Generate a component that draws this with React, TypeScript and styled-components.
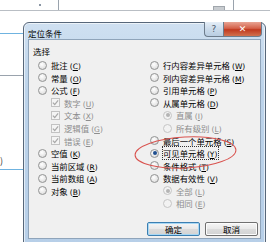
import React from "react";
import styled, { createGlobalStyle, css } from "styled-components";

const Global = createGlobalStyle`
  html, body { margin: 0; padding: 0; }
  body { width: 270px; height: 242px; overflow: hidden; background: #f6f7f8;
    font-family: "Noto Sans CJK SC", "Noto Sans", sans-serif; }
`;

const Screen = styled.div`
  position: relative;
  width: 270px;
  height: 242px;
  overflow: hidden;
  background: #f8f8f8;
  display: flex;
  flex-direction: column;
`;

const FormulaStrip = styled.div`
  height: 10px;
  display: flex;
  background: #ffffff;
  border-bottom: 1px solid #b9bec4;
`;

const NameBox = styled.div`
  width: 58px;
  position: relative;
  &::after { content: ""; position: absolute; left: 39px; top: 4px; width: 2px; height: 2px; background: #8a96a4; }
`;

const FormulaBox = styled.div`
  width: 166px;
  border-left: 1px solid #9aa3ad;
  border-right: 1px solid #9aa3ad;
  display: flex;
  justify-content: flex-end;
  align-items: flex-end;
  padding-right: 8px;
`;

const Thumb = styled.div`
  width: 10px;
  height: 3px;
  background: #c8ccd0;
  border: 1px solid #a0a6ac;
  border-bottom: none;
`;

const Sheet = styled.div`
  flex: 1;
  display: flex;
  flex-direction: column;
  background: #ffffff;
`;

const SheetLine = styled.div<{ $top: number; $color: string }>`
  margin-top: ${(p) => p.$top}px;
  width: 24px;
  height: 1px;
  background: ${(p) => p.$color};
`;

const SheetText = styled.div`
  margin-top: 80px;
  font-size: 9px;
  line-height: 10px;
  color: #333;
`;

const Dialog = styled.div`
  position: absolute;
  left: 23px;
  top: 22px;
  width: 243px;
  height: 224px;
  box-sizing: border-box;
  border: 1px solid #57677a;
  border-radius: 6px 6px 0 0;
  background: linear-gradient(180deg, #cfe0f1 0%, #bcd3ea 30%, #b7cfe8 100%);
  box-shadow: 0 0 0 1px rgba(255,255,255,0.6) inset;
  display: flex;
  flex-direction: column;
`;

const TitleBar = styled.div`
  height: 16px;
  display: flex;
  align-items: center;
  padding-left: 4px;
  font-size: 8.5px;
  color: #000;
  position: relative;
`;

const Title = styled.span`
  flex: 1;
  line-height: 10px;
  margin-top: 4px;
`;

const CaptionButtons = styled.div`
  position: absolute;
  right: 3px;
  top: -1px;
  display: flex;
`;

const CapBtn = styled.div<{ $close?: boolean }>`
  height: 14px;
  display: flex;
  align-items: center;
  justify-content: center;
  font-family: "DejaVu Sans", sans-serif;
  font-weight: bold;
  border: 1px solid #6d7c8c;
  border-top: none;
  ${(p) =>
    p.$close
      ? css`
          width: 37px;
          border-radius: 0 0 4px 0;
          background: linear-gradient(180deg, #e8a493 0%, #d4614a 45%, #c0391f 55%, #d0714f 100%);
          color: #fff;
          font-size: 9px;
        `
      : css`
          width: 18px;
          border-right: none;
          border-radius: 0 0 0 4px;
          background: linear-gradient(180deg, #e5eef7 0%, #cbdbeb 50%, #b9cde2 100%);
          color: #4a5a6c;
          font-size: 9px;
          font-weight: normal;
        `}
`;

const Client = styled.div`
  margin: 0 4px 6px 4px;
  flex: 1;
  background: #f0f0f0;
  border: 1px solid #8fa4ba;
  display: flex;
  flex-direction: column;
  color: #000;
`;

const GroupLabel = styled.div`
  height: 12px;
  line-height: 12px;
  margin-top: 5px;
  padding-left: 4px;
  font-size: 8.5px;
`;

const Columns = styled.div`
  margin-top: 2px;
  display: grid;
  grid-template-columns: 112px 1fr;
  padding-left: 9px;
`;

const Col = styled.div`
  display: flex;
  flex-direction: column;
`;

const Row = styled.div<{ $indent?: number; $disabled?: boolean }>`
  height: 12.55px;
  display: flex;
  align-items: center;
  padding-left: ${(p) => p.$indent || 0}px;
  color: ${(p) => (p.$disabled ? "#8d8d8d" : "#000")};
  white-space: nowrap;
  font-size: 8.4px;
`;

const Radio = styled.span<{ $checked?: boolean; $disabled?: boolean }>`
  width: 9px;
  height: 9px;
  border-radius: 50%;
  box-sizing: border-box;
  border: 1px solid ${(p) => (p.$disabled ? "#c5c5c5" : "#939494")};
  background: ${(p) =>
    p.$disabled ? "#f2f2f2" : "radial-gradient(circle at 40% 35%, #ffffff 0%, #e6e6e6 60%, #cfcfcf 100%)"};
  margin-right: 4px;
  flex: none;
  display: flex;
  align-items: center;
  justify-content: center;
  &::after {
    content: "";
    display: ${(p) => (p.$checked ? "block" : "none")};
    width: 4px;
    height: 4px;
    border-radius: 50%;
    background: ${(p) => (p.$disabled ? "#b4b4b4" : "#1f4f8f")};
  }
`;

const Check = styled.span`
  width: 9px;
  height: 9px;
  box-sizing: border-box;
  border: 1px solid #c2c2c2;
  background: #f4f4f4;
  margin-right: 4px;
  flex: none;
  display: flex;
  align-items: center;
  justify-content: center;
`;

const Key = styled.span`
  font-family: "DejaVu Sans", sans-serif;
  font-size: 7.5px;
  margin-left: 2px;
`;

const Focus = styled.span`
  outline: 1px dotted #333;
  outline-offset: 0px;
  padding-right: 1px;
`;

const ButtonRow = styled.div`
  margin-top: auto;
  margin-bottom: 2px;
  display: flex;
  justify-content: flex-end;
  gap: 5px;
  padding-right: 2px;
`;

const Button = styled.div<{ $default?: boolean }>`
  width: 53px;
  height: 14px;
  box-sizing: border-box;
  border: 1px solid ${(p) => (p.$default ? "#3c7fb1" : "#707070")};
  border-radius: 2px;
  background: linear-gradient(180deg, #f6f6f6 0%, #e8e8e8 50%, #dcdcdc 51%, #d2d2d2 100%);
  box-shadow: ${(p) => (p.$default ? "0 0 0 1px #a8d8f5 inset" : "0 0 0 1px #fcfcfc inset")};
  display: flex;
  align-items: center;
  justify-content: center;
  font-size: 8.5px;
  line-height: 10px;
`;

const Ellipse = styled.svg`
  position: absolute;
  left: 130px;
  top: 132px;
  pointer-events: none;
`;

type Item = { label: string; key: string; kind: "radio" | "check"; indent?: number; disabled?: boolean; checked?: boolean; focus?: boolean };

const left: Item[] = [
  { label: "批注", key: "C", kind: "radio" },
  { label: "常量", key: "O", kind: "radio" },
  { label: "公式", key: "F", kind: "radio" },
  { label: "数字", key: "U", kind: "check", indent: 13, disabled: true, checked: true },
  { label: "文本", key: "X", kind: "check", indent: 13, disabled: true, checked: true },
  { label: "逻辑值", key: "G", kind: "check", indent: 13, disabled: true, checked: true },
  { label: "错误", key: "E", kind: "check", indent: 13, disabled: true, checked: true },
  { label: "空值", key: "K", kind: "radio" },
  { label: "当前区域", key: "R", kind: "radio" },
  { label: "当前数组", key: "A", kind: "radio" },
  { label: "对象", key: "B", kind: "radio" },
];

const right: Item[] = [
  { label: "行内容差异单元格", key: "W", kind: "radio" },
  { label: "列内容差异单元格", key: "M", kind: "radio" },
  { label: "引用单元格", key: "P", kind: "radio" },
  { label: "从属单元格", key: "D", kind: "radio" },
  { label: "直属", key: "I", kind: "radio", indent: 13, disabled: true, checked: true },
  { label: "所有级别", key: "L", kind: "radio", indent: 13, disabled: true },
  { label: "最后一个单元格", key: "S", kind: "radio" },
  { label: "可见单元格", key: "Y", kind: "radio", checked: true, focus: true },
  { label: "条件格式", key: "T", kind: "radio" },
  { label: "数据有效性", key: "V", kind: "radio" },
  { label: "全部", key: "L", kind: "radio", indent: 13, disabled: true, checked: true },
  { label: "相同", key: "E", kind: "radio", indent: 13, disabled: true },
];

const Tick = () => (
  <svg width="7" height="7" viewBox="0 0 8 8">
    <path d="M1 4.2 L3.1 6.3 L7 1.5" fill="none" stroke="#a8a8a8" strokeWidth="1.4" />
  </svg>
);

const Option = ({ it }: { it: Item }) => {
  const text = (
    <>
      {it.label}
      <Key>(<u>{it.key}</u>)</Key>
    </>
  );
  return (
    <Row $indent={it.indent} $disabled={it.disabled}>
      {it.kind === "radio" ? (
        <Radio $checked={it.checked} $disabled={it.disabled} />
      ) : (
        <Check>{it.checked && <Tick />}</Check>
      )}
      {it.focus ? <Focus>{text}</Focus> : <span>{text}</span>}
    </Row>
  );
};

export default function App() {
  return (
    <>
      <Global />
      <Screen>
        <FormulaStrip>
          <NameBox />
          <FormulaBox>
            <Thumb />
          </FormulaBox>
        </FormulaStrip>
        <Sheet>
          <SheetLine $top={22} $color="#6fb3e0" />
          <SheetLine $top={41} $color="#9aa3ad" />
          <SheetText>)</SheetText>
          <SheetLine $top={3} $color="#6fb3e0" />
        </Sheet>
        <Dialog>
          <TitleBar>
            <Title>定位条件</Title>
            <CaptionButtons>
              <CapBtn>?</CapBtn>
              <CapBtn $close>✕</CapBtn>
            </CaptionButtons>
          </TitleBar>
          <Client>
            <GroupLabel>选择</GroupLabel>
            <Columns>
              <Col>
                {left.map((it, i) => (
                  <Option key={i} it={it} />
                ))}
              </Col>
              <Col>
                {right.map((it, i) => (
                  <Option key={i} it={it} />
                ))}
              </Col>
            </Columns>
            <ButtonRow>
              <Button $default>确定</Button>
              <Button>取消</Button>
            </ButtonRow>
          </Client>
        </Dialog>
        <Ellipse width="112" height="40" viewBox="0 0 112 40">
          <ellipse cx="55.5" cy="20.5" rx="50.5" ry="15.5" fill="none" stroke="#d9534f" strokeWidth="1" transform="rotate(-3 55.5 20.5)" />
        </Ellipse>
      </Screen>
    </>
  );
}
